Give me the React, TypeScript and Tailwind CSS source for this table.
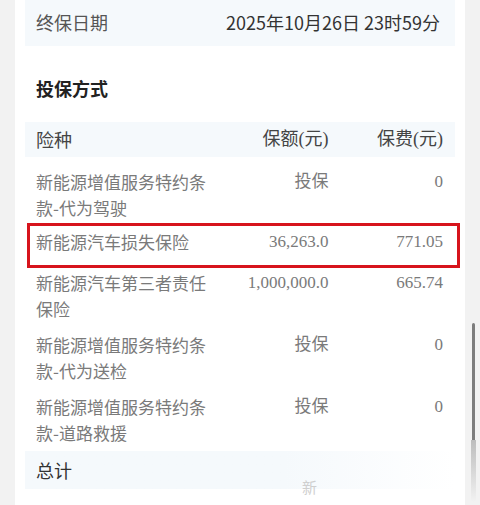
const CJK = "font-['Noto_Sans_CJK_SC',sans-serif]";
const SERIF = "font-['Liberation_Serif','Noto_Sans_CJK_SC',serif]";

type Row = { name: string[]; amount: string; premium: string; highlight?: boolean };

const ROWS: Row[] = [
  { name: ["新能源增值服务特约条", "款-代为驾驶"], amount: "投保", premium: "0" },
  { name: ["新能源汽车损失保险"], amount: "36,263.0", premium: "771.05", highlight: true },
  { name: ["新能源汽车第三者责任", "保险"], amount: "1,000,000.0", premium: "665.74" },
  { name: ["新能源增值服务特约条", "款-代为送检"], amount: "投保", premium: "0" },
  { name: ["新能源增值服务特约条", "款-道路救援"], amount: "投保", premium: "0" },
];

function PolicyRow({ row }: { row: Row }) {
  return (
    <div
      className={
        "relative grid grid-cols-[178px_1fr_1fr] items-start px-[11px] pr-[12px] text-[17px] leading-[26px] text-[#7a7a7a] " +
        (row.highlight ? "pt-[3px] pb-[10px]" : "py-[5px]")
      }
    >
      <div className={CJK}>
        {row.name.map((line) => (
          <div key={line}>{line}</div>
        ))}
      </div>
      <div className={SERIF + " text-right"}>{row.amount}</div>
      <div className={SERIF + " text-right"}>{row.premium}</div>
      {row.highlight ? (
        <span className="pointer-events-none absolute -top-[3px] -bottom-[3px] left-[2px] -right-[5px] border-[3px] border-[#d7141c]" />
      ) : null}
    </div>
  );
}

export default function App() {
  return (
    <div className="min-h-screen bg-[#f2f2f2] px-[15px]">
      <div className="relative h-[505px] overflow-hidden bg-white px-[10px]">
        {/* end date */}
        <div className={"flex h-[46px] items-center justify-between bg-[#f5f9fc] pb-[2px] pl-[11px] pr-[15px] text-[18px] " + CJK}>
          <span className="text-[#555]">终保日期</span>
          <span className="text-[#333]">2025年10月26日 23时59分</span>
        </div>

        {/* section title */}
        <div className={"px-[11px] pt-[29px] pb-[21px] text-[18px] font-bold leading-[26px] text-[#222] " + CJK}>
          投保方式
        </div>

        {/* table header */}
        <div className="grid h-[35px] grid-cols-[178px_1fr_1fr] items-center bg-[#f5f9fc] px-[11px] pr-[12px] text-[18px] text-[#444]">
          <span className={CJK}>险种</span>
          <span className={SERIF + " text-right"}>保额(元)</span>
          <span className={SERIF + " text-right"}>保费(元)</span>
        </div>

        <div className="mt-[7px] flex flex-col">
          {ROWS.map((row) => (
            <PolicyRow key={row.name.join("")} row={row} />
          ))}
        </div>

        {/* total */}
        <div className={"flex h-[38px] items-center bg-gradient-to-r from-[#f5f9fc] from-60% to-white px-[11px] text-[18px] text-[#333] " + CJK}>
          总计
        </div>

        <span className={"absolute left-[287px] top-[476px] text-[15px] text-[#cfcfcf] " + CJK}>新</span>
      </div>

      {/* scroll indicator */}
      <div className="absolute left-[472px] top-[323px] h-[120px] w-[3px] rounded-full bg-[#7d7d7d]" />
      <div className="absolute left-[471px] top-[440px] h-[62px] w-[5px] bg-gradient-to-b from-[#bdbdbd] to-[#f2f2f2]" />
    </div>
  );
}
